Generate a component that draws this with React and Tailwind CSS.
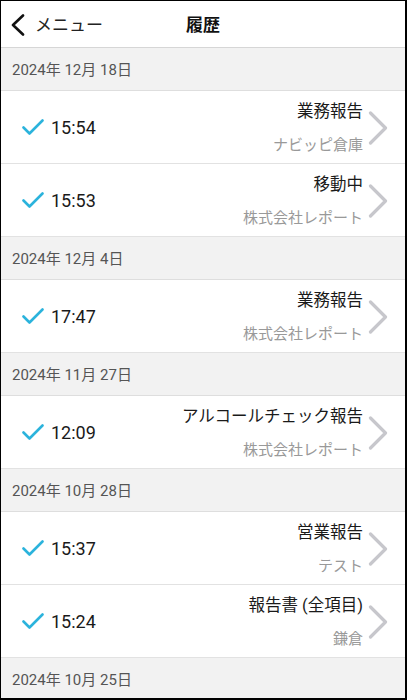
import React from "react";

const data = [
  {
    date: "2024年 12月 18日",
    rows: [
      { time: "15:54", title: "業務報告", sub: "ナビッピ倉庫" },
      { time: "15:53", title: "移動中", sub: "株式会社レポート" },
    ],
  },
  {
    date: "2024年 12月 4日",
    rows: [{ time: "17:47", title: "業務報告", sub: "株式会社レポート" }],
  },
  {
    date: "2024年 11月 27日",
    rows: [{ time: "12:09", title: "アルコールチェック報告", sub: "株式会社レポート" }],
  },
  {
    date: "2024年 10月 28日",
    rows: [
      { time: "15:37", title: "営業報告", sub: "テスト" },
      { time: "15:24", title: "報告書 (全項目)", sub: "鎌倉" },
    ],
  },
  { date: "2024年 10月 25日", rows: [] },
];

function Check() {
  return (
    <svg width="22" height="17" viewBox="0 0 22 17" fill="none">
      <polyline
        points="1.5,8.5 7.5,14.5 20.5,1.5"
        stroke="#2bb3dc"
        strokeWidth="2.6"
        strokeLinecap="round"
        strokeLinejoin="round"
      />
    </svg>
  );
}

function Chevron() {
  return (
    <svg width="20" height="34" viewBox="0 0 20 34" fill="none">
      <polyline
        points="2.5,2 17.5,17 2.5,32"
        stroke="#c7c7cc"
        strokeWidth="3.2"
        strokeLinecap="round"
        strokeLinejoin="round"
      />
    </svg>
  );
}

export default function App() {
  return (
    <div
      className="w-[407px] h-[700px] overflow-hidden bg-white border-l border-t border-r-2 border-b-2 border-black"
      style={{ fontFamily: 'Roboto, "Noto Sans CJK JP", "Noto Sans", sans-serif' }}
    >
      <div className="relative h-[47px] flex items-center border-b border-[#d6d6d6] bg-white pt-[2px]">
        <div className="flex items-center pl-[9px]">
          <svg width="16" height="22" viewBox="0 0 16 22" fill="none">
            <polyline
              points="13,1.5 3,11 13,20.5"
              stroke="#111"
              strokeWidth="2.6"
              strokeLinecap="round"
              strokeLinejoin="round"
            />
          </svg>
          <span className="ml-[9px] mt-[1px] text-[17px] text-[#222] leading-none">メニュー</span>
        </div>
        <div className="absolute inset-0 flex items-center justify-center pointer-events-none pt-[3px]">
          <span className="text-[17px] font-bold text-[#111] leading-none">履歴</span>
        </div>
      </div>
      {data.map((sec, i) => (
        <div key={i}>
          <div className="h-[43px] bg-[#f2f2f2] border-b border-[#dedede] flex items-center pl-[11px] pt-[3px]">
            <span className="text-[15px] text-[#555] leading-none">{sec.date}</span>
          </div>
          {sec.rows.map((r, j) => (
            <div
              key={j}
              className="h-[73px] border-b border-[#e2e2e2] flex items-center pl-[21px] pr-[17px] bg-white"
            >
              <Check />
              <span className="ml-[7px] mt-[2px] text-[18px] text-[#1a1a1a] leading-none">{r.time}</span>
              <div className="flex-1 flex flex-col items-end justify-center gap-[11px] mt-[3px]">
                <span className="text-[16.5px] leading-[22px] text-[#1a1a1a]">{r.title}</span>
                <span className="text-[15px] leading-[22px] text-[#999]">{r.sub}</span>
              </div>
              <div className="ml-[5px] mt-[2px]">
                <Chevron />
              </div>
            </div>
          ))}
        </div>
      ))}
    </div>
  );
}
